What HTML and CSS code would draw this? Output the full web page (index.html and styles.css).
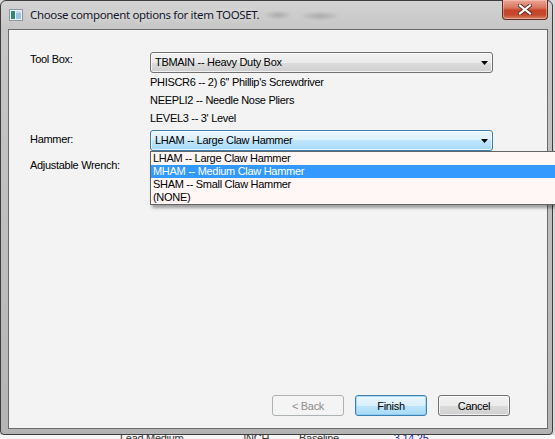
FILE: index.html
```html
<!DOCTYPE html>
<html lang="en">
<head>
    <meta charset="UTF-8">
    <title>Choose component options</title>
    <link rel="stylesheet" href="styles.css">
</head>
<body>
    <div class="desktop">
        <div class="window">
            <div class="titlebar">
                <span class="app-icon">
                    <svg width="14" height="12" viewBox="0 0 14 12">
                        <rect x="0.5" y="0.5" width="13" height="11" fill="#eef2f4" stroke="#8a96a2"/>
                        <rect x="2" y="2" width="4" height="8" fill="#2f8a74"/>
                        <rect x="7" y="2" width="5" height="8" fill="#9cc2e2"/>
                        <rect x="7" y="2" width="5" height="2" fill="#c8dcee"/>
                    </svg>
                </span>
                <span class="title">Choose component options for item TOOSET.</span>
                <button class="close" type="button">
                    <svg width="14" height="11" viewBox="0 0 14 11">
                        <path d="M2 1.5 L12 9.5 M12 1.5 L2 9.5" stroke="#5a2b22" stroke-width="4" stroke-linecap="square"/>
                        <path d="M2 1.5 L12 9.5 M12 1.5 L2 9.5" stroke="#ffffff" stroke-width="2.2" stroke-linecap="square"/>
                    </svg>
                </button>
            </div>

            <div class="client">
                <div class="form">
                    <div class="row">
                        <label class="label first">Tool Box:</label>
                        <div class="field">
                            <div class="combo">
                                <span>TBMAIN -- Heavy Duty Box</span>
                                <svg class="arrow" width="7" height="4" viewBox="0 0 7 4"><path d="M0 0 H7 L3.5 4 Z" fill="#000"/></svg>
                            </div>
                            <div class="parts">
                                <div>PHISCR6 -- 2) 6'' Phillip's Screwdriver</div>
                                <div>NEEPLI2 -- Needle Nose Pliers</div>
                                <div>LEVEL3 -- 3' Level</div>
                            </div>
                        </div>
                    </div>

                    <div class="row hammer">
                        <label class="label">Hammer:</label>
                        <div class="field">
                            <div class="combo hot">
                                <span>LHAM -- Large Claw Hammer</span>
                                <svg class="arrow" width="7" height="4" viewBox="0 0 7 4"><path d="M0 0 H7 L3.5 4 Z" fill="#000"/></svg>
                            </div>
                            <ul class="dropdown">
                                <li>LHAM -- Large Claw Hammer</li>
                                <li class="selected">MHAM -- Medium Claw Hammer</li>
                                <li>SHAM -- Small Claw Hammer</li>
                                <li>(NONE)</li>
                            </ul>
                        </div>
                    </div>

                    <div class="row wrench">
                        <label class="label">Adjustable Wrench:</label>
                    </div>
                </div>

                <div class="buttons">
                    <button class="btn" type="button" disabled>&lt; Back</button>
                    <button class="btn default" type="button">Finish</button>
                    <button class="btn" type="button">Cancel</button>
                </div>
            </div>
        </div>

        <div class="behind">
            <span class="b1">Lead Medium</span>
            <span class="b2">INCH</span>
            <span class="b3">Baseline</span>
            <span class="b4">3.14 25</span>
        </div>
    </div>
</body>
</html>
```

FILE: styles.css
```css
body {
    margin: 0;
    background: #d9d9d9;
    font-family: "Liberation Sans", Arial, sans-serif;
    font-size: 11px;
    letter-spacing: -0.3px;
    color: #000;
}
.desktop {
    width: 555px;
    height: 439px;
    overflow: hidden;
    display: flex;
    flex-direction: column;
}

/* window frame */
.window {
    width: 553px;
    height: 435px;
    flex: none;
    box-sizing: border-box;
    border: 1px solid #3e3e3e;
    border-radius: 6px 6px 4px 4px;
    padding: 0 4px 5px 7px;
    background: linear-gradient(to bottom, #d3d3d3 0px, #c6c6c6 28px, #bdbdbd 60%, #b4b4b4 100%);
    display: flex;
    flex-direction: column;
}
.titlebar {
    height: 28px;
    flex: none;
    display: flex;
    align-items: flex-start;
    background:
        radial-gradient(ellipse 14px 5px at 270px 14px, rgba(110,110,110,0.35), transparent),
        radial-gradient(ellipse 20px 5px at 312px 15px, rgba(110,110,110,0.35), transparent);
}
.app-icon {
    margin: 8px 0 0 1px;
    width: 14px;
    height: 12px;
    display: block;
}
.app-icon svg { display: block; }
.title {
    margin: 6px 0 0 7px;
    font-family: "Noto Sans", "Open Sans", sans-serif;
    font-size: 11.5px;
    letter-spacing: -0.35px;
    line-height: 16px;
    color: #16162a;
    text-shadow: 0 0 6px rgba(255,255,255,0.8);
}
.close {
    margin: -1px 0 0 auto;
    width: 46px;
    height: 20px;
    padding: 0;
    border: 1px solid #5e2d24;
    border-top: none;
    border-radius: 0 0 4px 4px;
    background: linear-gradient(to bottom, #e9a696 0%, #d9775f 40%, #c6432a 55%, #c54a2f 80%, #d88a6e 100%);
    box-shadow: inset 0 0 0 1px rgba(255,210,200,0.45);
    display: flex;
    align-items: center;
    justify-content: center;
}
.close svg { display: block; }

/* client area */
.client {
    flex: 1;
    border: 1px solid #6b6b6b;
    background: #f3f3f3;
    display: flex;
    flex-direction: column;
}
.form {
    padding: 22px 0 0 21px;
}
.row {
    display: flex;
    align-items: flex-start;
}
.label {
    width: 120px;
    flex: none;
    line-height: 13px;
    padding-top: 3px;
}
.label.first { padding-top: 1px; }
.field {
    width: 343px;
    position: relative;
}
.hammer { margin-top: 3px; }
.wrench { margin-top: 5px; }

.combo {
    height: 21px;
    box-sizing: border-box;
    border: 1px solid #707070;
    border-radius: 3px;
    padding: 0 4px 0 4px;
    line-height: 19px;
    display: flex;
    align-items: center;
    justify-content: space-between;
    background: linear-gradient(to bottom, #f2f2f2 0%, #ebebeb 50%, #dddddd 50%, #cfcfcf 100%);
    box-shadow: inset 0 0 0 1px rgba(255,255,255,0.7);
}
.combo.hot {
    border-color: #3c7fb1;
    background: linear-gradient(to bottom, #eaf6fd 0%, #d9f0fc 50%, #bee6fd 50%, #a7d9f5 100%);
}
.arrow { display: block; margin-top: 1px; }

.parts {
    line-height: 18px;
}

/* popup list of the hammer combo */
.dropdown {
    position: absolute;
    top: 21px;
    left: 0;
    width: 410px;
    margin: 0;
    padding: 0;
    list-style: none;
    border: 1px solid #646464;
    background: #fff6f6;
    box-shadow: 2px 3px 3px rgba(0,0,0,0.35);
}
.dropdown li {
    height: 13px;
    line-height: 13px;
    padding-left: 2px;
}
.dropdown li.selected {
    background: #3399ff;
    color: #fff;
}

/* bottom buttons */
.buttons {
    margin-top: auto;
    display: flex;
    justify-content: flex-end;
    gap: 11px;
    padding: 0 37px 12px 0;
}
.btn {
    width: 72px;
    height: 21px;
    padding: 0;
    font-family: inherit;
    font-size: 11px;
    letter-spacing: -0.3px;
    color: #000;
    border: 1px solid #707070;
    border-radius: 3px;
    background: linear-gradient(to bottom, #f2f2f2 0%, #ebebeb 50%, #dddddd 50%, #cfcfcf 100%);
    box-shadow: inset 0 0 0 1px rgba(255,255,255,0.7);
}
.btn.default {
    border-color: #3c7fb1;
    background: linear-gradient(to bottom, #eaf6fd 0%, #d9f0fc 50%, #bee6fd 50%, #a7d9f5 100%);
    box-shadow: inset 0 0 0 1px rgba(130,200,240,0.6);
}
.btn:disabled {
    color: #8d8d8d;
    border-color: #adb2b5;
    background: #f4f4f4;
    box-shadow: none;
}

/* bits of the window underneath */
.behind {
    height: 4px;
    flex: none;
    display: flex;
    background: #f7f7f7;
    line-height: 11px;
    overflow: hidden;
}
.behind span { margin-top: -2px; }
.b1 { margin-left: 120px; color: #333; }
.b2 { margin-left: 60px; color: #333; }
.b3 { margin-left: 30px; color: #333; }
.b4 { margin-left: 55px; color: #1a1aa0; }
```
